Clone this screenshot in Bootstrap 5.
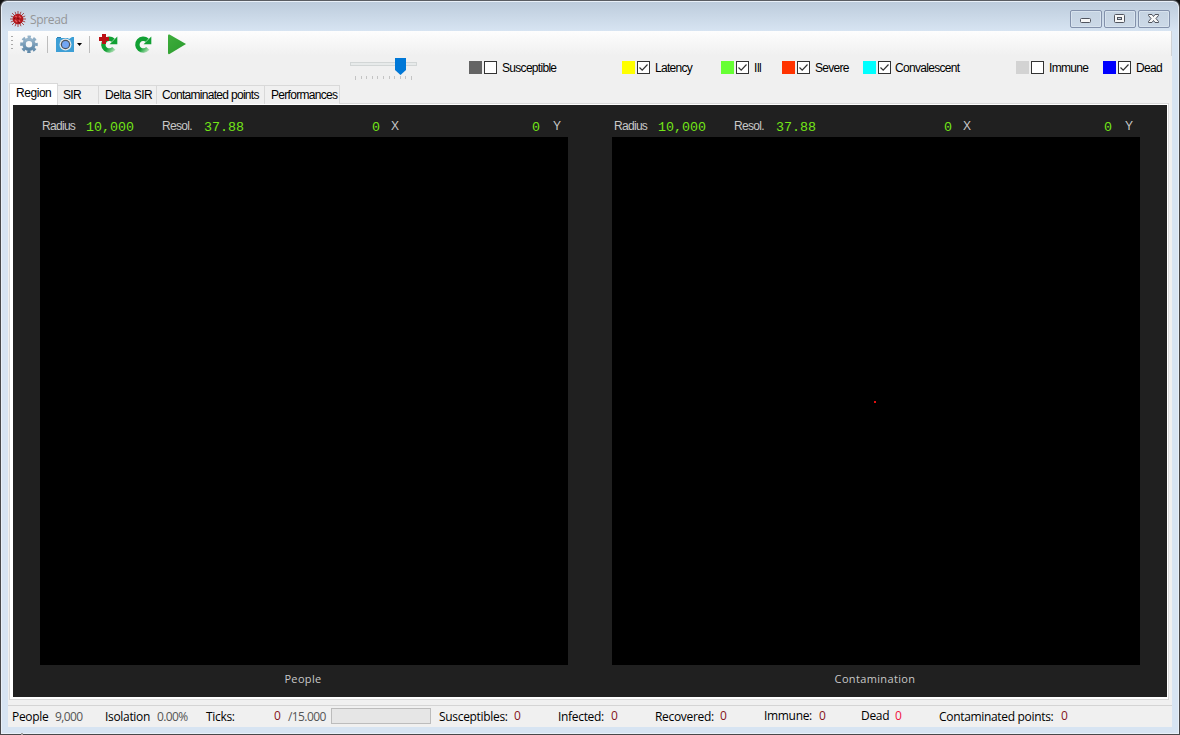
<!DOCTYPE html>
<html lang="en">
<head>
<meta charset="utf-8">
<title>Spread</title>
<link href="https://cdn.jsdelivr.net/npm/bootstrap@5.3.0/dist/css/bootstrap.min.css" rel="stylesheet">
<style>
body{background:#111;width:1180px;height:735px;overflow:hidden;font-family:"Liberation Sans",Arial,sans-serif;font-size:12px;line-height:14px;color:#000}
.win{width:1180px;height:735px;border:1px solid #48484a;border-top-color:#5a5d62;border-radius:7px 7px 0 0;background:linear-gradient(#bccbdb 0,#d7e4f2 30px);box-shadow:inset 0 0 0 1px #e9f0f8;padding:0 7px 7px}
.titlebar{height:30px}
.titlebar .cap{font:12px/16px "Open Sans",sans-serif;letter-spacing:-.5px;color:#949698;margin-left:3px;margin-top:11px}
.wbtn{width:32px;height:18px;border:1px solid #8391ab;border-radius:2px;background:linear-gradient(#c5d3e2,#ccd9e7);box-shadow:inset 0 0 0 1px #d8e3ee;margin-top:9px}
.client{height:696px;background:#f0f0f0}
.tools{height:25px;background:linear-gradient(#fdfdfd,#f0f0f0);border-right:1px solid #cfd2d6}
.legendrow{height:27px;display:grid;grid-template-columns:342px 119px 153px 99px 61px 81px 153px 87px 69px}
.lg{display:flex;height:14px;margin-top:5px}
.sw{width:13px;height:13px;margin-right:2px}
.cb{width:13px;height:13px;border:1px solid #333;background:#fff;margin-right:5px;display:block}
.cb svg{display:block}
.tight{letter-spacing:-.7px;white-space:nowrap}
.loose{letter-spacing:-.45px}
.tabs{height:21px;padding-left:1px;align-items:flex-end}
.tabx{height:19px;border:1px solid #d9d9d9;border-left:0;border-bottom:0;padding:2px 0 0 5px;background:#f0f0f0}
.tabx.active{background:#fff;border-left:1px solid #d9d9d9;padding:2px 0 0 6px;position:relative;margin-bottom:-1px;height:22px}
.pane{height:597px;margin:-1px 3px 0 1px;border:1px solid #d9d9d9;background:#fff;padding:1px 1px 2px 3px}
.dark{height:592px;background:#202020;padding:0 27px}
.view{width:528px}
.vhead{height:32px;display:grid;grid-template-columns:46px 76px 42px 136px 40px 26px 134px 28px;color:#c8c8c8;padding-top:14px}
.num{font:13.33px/15px "Liberation Mono","Courier New",monospace;letter-spacing:0;color:#73e617;padding-top:1px}
.map{height:528px;background:#000}
.cpt{font:11px/16px "Open Sans",sans-serif;letter-spacing:.35px;color:#c8c8c8;text-align:center;margin-top:6px;padding-right:2px}
.dot{width:2px;height:2px;background:#e01010;margin:264px 0 0 262px}
.status{height:22px;margin-top:5px;border-top:1px solid #d4d4d4;font:12px/16px "Open Sans",sans-serif;letter-spacing:-.32px;display:grid;grid-template-columns:43px 50px 52px 49px 68px 14px 43px 108px 75px 44px 53px 44px 65px 44px 55px 42px 34px 44px 122px 98px;padding-left:4px;white-space:nowrap}
.status>span{padding-top:3px}
.v{color:#555;letter-spacing:-.6px}.r{color:#861420}.status .up{margin-top:-1px}
.pbar{width:100px;height:16px;border:1px solid #bcbcbc;background:#e6e6e6;margin-top:2px}
svg{flex:none;display:block}
</style>
</head>
<body>
<div class="win">
 <header class="titlebar d-flex">
  <svg width="18" height="18" viewBox="0 0 18 18" style="margin:9px 0 0 1px"><path d="M9 1v16M1 9h16M3 3l12 12M15 3 3 15M6 1.800l6 14.400M12 1.800 6 16.200M1.800 6l14.400 6M1.800 12l14.400-6" stroke="#98282a" stroke-width=".8"/><circle cx="9" cy="9" r="5.300" fill="#b3191e"/><path d="M6 6l2 1M10 6l2 2M6 10l2 2M10 10l1 2" stroke="#e2595c" stroke-width="1.200"/><path d="M8 8l2 1M5 8l1 1M9 12l2 1" stroke="#7d0b10"/></svg>
  <div class="cap" style="letter-spacing:-.35px">Spread</div>
  <div class="ms-auto d-flex" style="gap:2px;margin-right:2px">
   <div class="wbtn"><svg width="30" height="16"><rect x="9.500" y="7.500" width="10" height="4" rx="1" fill="#f7f7f7" stroke="#50545e"/></svg></div>
   <div class="wbtn"><svg width="30" height="16"><rect x="9.500" y="3.500" width="10" height="8" rx="1" fill="#f7f7f7" stroke="#50545e"/><rect x="12.500" y="6.500" width="4" height="2" fill="#c8d5e2" stroke="#50545e"/></svg></div>
   <div class="wbtn"><svg width="30" height="16"><path d="M9.500 3.500h3.500l1.500 2 1.500-2h3.500v1L17 7.500l2.500 3v1H16l-1.500-2-1.500 2H9.500v-1l2.500-3-2.500-3z" fill="#f7f7f7" stroke="#50545e"/></svg></div>
  </div>
 </header>
 <main class="client">
  <div class="tools">
   <svg width="190" height="27" viewBox="8 31 190 27">
    <defs><linearGradient id="gg" x1="0" y1="0" x2="0" y2="1"><stop stop-color="#95b3c9"/><stop offset="1" stop-color="#6089a9"/></linearGradient><linearGradient id="pg" x1="0" y1="0" x2="1" y2="1"><stop stop-color="#3fae3d"/><stop offset="1" stop-color="#299a2c"/></linearGradient>
    <linearGradient id="ag" x1="0" y1="0" x2="1" y2="1"><stop offset=".6" stop-color="#11a033"/><stop offset="1" stop-color="#a5dbad"/></linearGradient></defs>
    <path d="M11 36h2v1h-2zM11 40h2v1h-2zM11 44h2v1h-2zM11 48h2v1h-2z" fill="#aaa"/>
    <g stroke="url(#gg)" fill="none"><circle cx="29" cy="44.300" r="4.900" stroke-width="3.400"/><circle cx="29" cy="44.300" r="7.400" stroke-width="2.800" stroke-dasharray="3.300 2.512" stroke-dashoffset="1.650"/></g>
    <path d="M47.500 36v17M89.500 36v17" stroke="#bdbdbd"/>
    <path d="M56 38h12l1 1 3-2h2v15H56z" fill="#3d9fd6"/><path d="M57 37h4v1h-4z" fill="#2b7fb4"/><circle cx="65.500" cy="44.500" r="6" fill="#e3e7ea"/><circle cx="65.500" cy="44.500" r="4.700" fill="#4b5360"/><circle cx="65.500" cy="44.500" r="3.500" fill="#73a6f4"/>
    <path d="M77 43h5l-2.500 3z"/>
    <g id="rf"><path d="M147.200 40.200a5.900 5.900 0 1 0 .6 8.200" fill="none" stroke="url(#ag)" stroke-width="4.400"/><path d="M151.300 36.500v7.700h-7.700z" fill="#11a033"/></g>
    <use href="#rf" x="-34"/>
    <path d="M102 34h4v3h3v4h-3v3h-4v-3h-3v-4h3z" fill="#bb1015"/>
    <path d="M168 35.500q0-1.500 1.500-1l16.500 9.500-16.500 10q-1.500.5-1.500-1z" fill="url(#pg)"/>
   </svg>
  </div>
  <div class="legendrow tight">
   <span></span>
   <svg width="70" height="25" viewBox="350 56 70 25"><rect x="350.500" y="62.500" width="66" height="3" fill="#e7eaea" stroke="#d2d6d6"/><path d="M355.500 76v4M361.500 76v3M366.500 76v3M372.500 76v3M377.500 76v3M383.500 76v3M389.500 76v3M394.500 76v3M400.500 76v3M405.500 76v3M411.500 76v4" stroke="#c4c4c4"/><path d="M395 58h11v12l-5.500 5-5.500-5z" fill="#0078d7"/></svg>
   <div class="lg"><i class="sw" style="background:#646464"></i><i class="cb"></i>Susceptible</div>
   <div class="lg"><i class="sw" style="background:#ff0"></i><i class="cb"><svg width="11" height="11"><path d="M1.500 5.500l2.700 2.700 5.300-5.700" fill="none" stroke="#333" stroke-width="1.200"/></svg></i>Latency</div>
   <div class="lg loose"><i class="sw" style="background:#6f3"></i><i class="cb"><svg width="11" height="11"><path d="M1.500 5.500l2.700 2.700 5.300-5.700" fill="none" stroke="#333" stroke-width="1.200"/></svg></i>Ill</div>
   <div class="lg"><i class="sw" style="background:#f30"></i><i class="cb"><svg width="11" height="11"><path d="M1.500 5.500l2.700 2.700 5.300-5.700" fill="none" stroke="#333" stroke-width="1.200"/></svg></i>Severe</div>
   <div class="lg"><i class="sw" style="background:#0ff"></i><i class="cb" style="margin-right:4px"><svg width="11" height="11"><path d="M1.500 5.500l2.700 2.700 5.300-5.700" fill="none" stroke="#333" stroke-width="1.200"/></svg></i>Convalescent</div>
   <div class="lg"><i class="sw" style="background:#d3d3d3"></i><i class="cb"></i>Immune</div>
   <div class="lg"><i class="sw" style="background:#00f"></i><i class="cb"><svg width="11" height="11"><path d="M1.500 5.500l2.700 2.700 5.300-5.700" fill="none" stroke="#333" stroke-width="1.200"/></svg></i>Dead</div>
  </div>
  <div class="tabs d-flex tight">
   <div class="tabx active loose" style="width:49px">Region</div><div class="tabx" style="width:41px">SIR</div><div class="tabx loose" style="width:58px;padding-left:6px">Delta SIR</div><div class="tabx" style="width:108px">Contaminated points</div><div class="tabx" style="width:75px;padding-left:6px">Performances</div>
  </div>
  <div class="pane"><div class="dark d-flex justify-content-between">
   <section class="view"><div class="vhead tight"><span class="ps-1" style="margin-left:-2px">Radius</span><span class="num">10,000</span><span>Resol.</span><span class="num">37.88</span><span class="num text-end">0</span><span style="padding-left:11px">X</span><span class="num text-end">0</span><span style="padding-left:13px">Y</span></div><div class="map"></div><div class="cpt">People</div></section>
   <section class="view"><div class="vhead tight"><span class="ps-1" style="margin-left:-2px">Radius</span><span class="num">10,000</span><span>Resol.</span><span class="num">37.88</span><span class="num text-end">0</span><span style="padding-left:11px">X</span><span class="num text-end">0</span><span style="padding-left:13px">Y</span></div><div class="map d-flex"><div class="dot"></div></div><div class="cpt">Contamination</div></section>
  </div></div>
  <footer class="status">
   <span>People</span><span class="v">9,000</span><span>Isolation</span><span class="v">0.00%</span><span>Ticks:</span><span class="r up">0</span><span class="v">/15.000</span><div class="pbar"></div><span>Susceptibles:</span><span class="r up">0</span><span>Infected:</span><span class="r up">0</span><span>Recovered:</span><span class="r up">0</span><span class="up">Immune:</span><span class="r up">0</span><span class="up">Dead</span><span class="up" style="color:#f01040">0</span><span>Contaminated points:</span><span class="r up">0</span>
   <svg width="12" height="12" style="margin-top:7px"><path d="M9 1h2v2H9zM5 5h2v2H5zM9 5h2v2H9zM1 9h2v2H1zM5 9h2v2H5zM9 9h2v2H9z" fill="#a0a0a0"/></svg>
  </footer>
 </main>
</div>
<script src="https://cdn.jsdelivr.net/npm/bootstrap@5.3.0/dist/js/bootstrap.bundle.min.js"></script>
</body>
</html>
